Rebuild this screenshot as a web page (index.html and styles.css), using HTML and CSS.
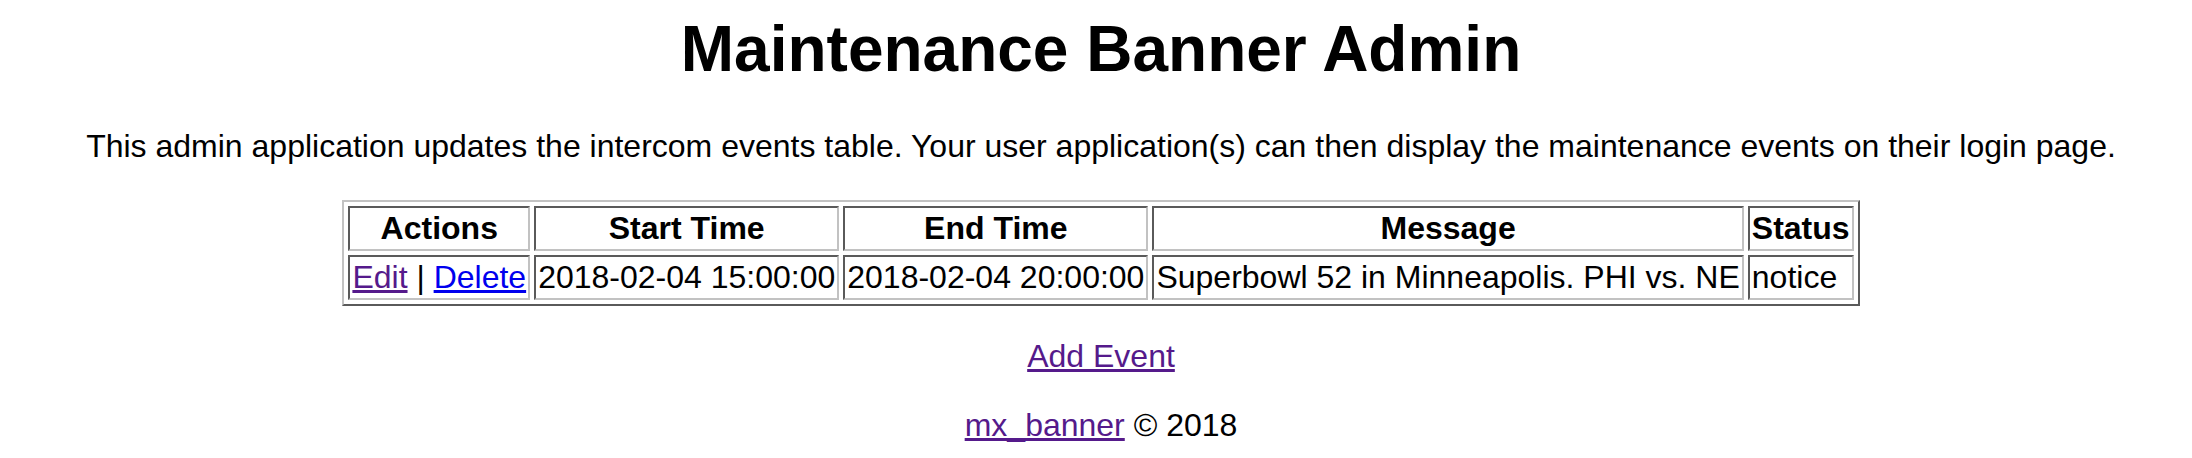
FILE: index.html
```html
<!DOCTYPE html>
<html>
<head>
<meta charset="utf-8">
<title>Maintenance Banner Admin</title>
<link rel="stylesheet" href="styles.css">
</head>
<body>
<main class="page">
  <h1 class="title">Maintenance Banner Admin</h1>
  <p class="intro">This admin application updates the intercom events table. Your user application(s) can then display the maintenance events on their login page.</p>
  <table class="events">
    <thead>
      <tr>
        <th>Actions</th>
        <th>Start Time</th>
        <th>End Time</th>
        <th>Message</th>
        <th>Status</th>
      </tr>
    </thead>
    <tbody>
      <tr>
        <td><a class="link visited" href="#">Edit</a> | <a class="link" href="#">Delete</a></td>
        <td>2018-02-04 15:00:00</td>
        <td>2018-02-04 20:00:00</td>
        <td>Superbowl 52 in Minneapolis. PHI vs. NE</td>
        <td>notice</td>
      </tr>
    </tbody>
  </table>
  <p class="add"><a class="link visited" href="#">Add Event</a></p>
  <p class="footer"><a class="link visited" href="#">mx_banner</a> © 2018</p>
</main>
</body>
</html>
```

FILE: styles.css
```css
html, body {
  margin: 0;
  padding: 0;
  background: #fff;
}
body {
  font-family: "Liberation Sans", Arial, sans-serif;
  font-size: 32px;
  color: #000;
}
.page {
  display: flex;
  flex-direction: column;
  align-items: center;
  text-align: center;
  padding-left: 10px;
}
.title {
  font-size: 64px;
  font-weight: bold;
  margin: 13px 0 0;
  line-height: 73.6px;
}
.intro {
  margin: 41px 0 0;
  line-height: 36.8px;
}
.events {
  margin-top: 36px;
  border-collapse: separate;
  border-spacing: 4px;
  border: 2px solid;
  border-color: #c2c2c2 #5a5a5a #5a5a5a #c2c2c2;
}
.events th,
.events td {
  padding: 2px;
  border: 2px solid;
  border-color: #5a5a5a #c2c2c2 #c2c2c2 #5a5a5a;
  line-height: 36.8px;
  white-space: nowrap;
}
.events th {
  font-weight: bold;
  text-align: center;
}
.events td {
  text-align: left;
}
.link {
  color: #0000ee;
  text-decoration: underline;
}
.link.visited {
  color: #551a8b;
}
.add {
  margin: 32px 0 0;
  line-height: 36.8px;
}
.footer {
  margin: 32px 0 0;
  line-height: 36.8px;
}
```
